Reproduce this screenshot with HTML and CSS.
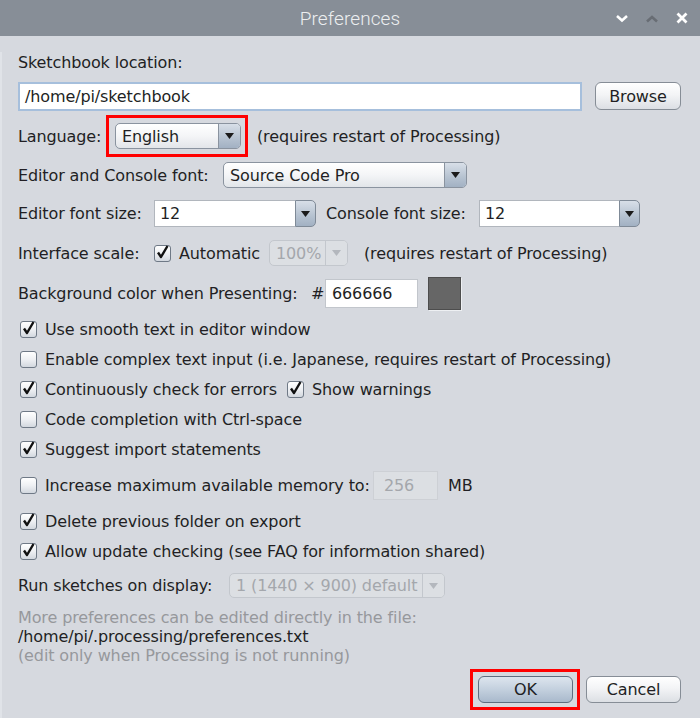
FILE: index.html
```html
<!DOCTYPE html>
<html>
<head>
<meta charset="utf-8">
<link rel="stylesheet" href="styles.css">
</head>
<body>
<div class="window">
  <div class="titlebar">
    <span class="title">Preferences</span>
    <div class="wm">
      <svg class="wm-btn wm-down" width="14" height="10" viewBox="0 0 14 10"><path d="M2 3 L7 7.5 L12 3" fill="none" stroke="#ffffff" stroke-width="2.6"/></svg>
      <svg class="wm-btn wm-up" width="14" height="10" viewBox="0 0 14 10"><path d="M2 7.5 L7 3 L12 7.5" fill="none" stroke="#686d74" stroke-width="2.6"/></svg>
      <svg class="wm-btn wm-close" width="12" height="12" viewBox="0 0 12 12"><path d="M1.5 1.5 L10.5 10.5 M10.5 1.5 L1.5 10.5" fill="none" stroke="#ffffff" stroke-width="2.8"/></svg>
    </div>
  </div>
  <div class="body">
    <div class="row r-label">Sketchbook location:</div>

    <div class="row r-path">
      <div class="textfield path">/home/pi/sketchbook</div>
      <div class="btn browse">Browse</div>
    </div>

    <div class="row r-lang">
      <span class="lbl w-lang">Language:</span>
      <div class="highlight hl-lang">
        <div class="combo c-lang">
          <span class="combo-text">English</span>
          <span class="combo-arrow"><svg width="9" height="6" viewBox="0 0 9 6"><path d="M0 0 H9 L4.5 6 Z" fill="#1b1b1b"/></svg></span>
        </div>
      </div>
      <span class="note-lang">(requires restart of Processing)</span>
    </div>

    <div class="row r-font">
      <span class="lbl w-font">Editor and Console font:</span>
      <div class="combo c-font">
        <span class="combo-text">Source Code Pro</span>
        <span class="combo-arrow"><svg width="9" height="6" viewBox="0 0 9 6"><path d="M0 0 H9 L4.5 6 Z" fill="#1b1b1b"/></svg></span>
      </div>
    </div>

    <div class="row r-size">
      <span class="lbl w-size">Editor font size:</span>
      <div class="ecombo c-size">
        <span class="ecombo-field">12</span>
        <span class="ecombo-arrow"><svg width="9" height="6" viewBox="0 0 9 6"><path d="M0 0 H9 L4.5 6 Z" fill="#1b1b1b"/></svg></span>
      </div>
      <span class="lbl w-csize">Console font size:</span>
      <div class="ecombo c-csize">
        <span class="ecombo-field">12</span>
        <span class="ecombo-arrow"><svg width="9" height="6" viewBox="0 0 9 6"><path d="M0 0 H9 L4.5 6 Z" fill="#1b1b1b"/></svg></span>
      </div>
    </div>

    <div class="row r-scale">
      <span class="lbl w-size">Interface scale:</span>
      <span class="cb checked"><svg width="17" height="17" viewBox="0 0 17 17"><path d="M4 8.5 L7 13 L13.5 2" fill="none" stroke="#111" stroke-width="2.4" stroke-linejoin="round"/></svg></span>
      <span class="w-auto">Automatic</span>
      <div class="combo disabled c-scale">
        <span class="combo-text">100%</span>
        <span class="combo-arrow"><svg width="9" height="6" viewBox="0 0 9 6"><path d="M0 0 H9 L4.5 6 Z" fill="#b3b7bd"/></svg></span>
      </div>
      <span class="note-scale">(requires restart of Processing)</span>
    </div>

    <div class="row r-bg">
      <span class="lbl w-bg">Background color when Presenting:</span>
      <span class="hash">#</span>
      <div class="textfield hex">666666</div>
      <div class="swatch"></div>
    </div>

    <div class="checks">
      <div class="row r-check">
        <span class="cb checked"><svg width="17" height="17" viewBox="0 0 17 17"><path d="M4 8.5 L7 13 L13.5 2" fill="none" stroke="#111" stroke-width="2.4" stroke-linejoin="round"/></svg></span>
        <span>Use smooth text in editor window</span>
      </div>
      <div class="row r-check">
        <span class="cb"></span>
        <span>Enable complex text input (i.e. Japanese, requires restart of Processing)</span>
      </div>
      <div class="row r-check">
        <span class="cb checked"><svg width="17" height="17" viewBox="0 0 17 17"><path d="M4 8.5 L7 13 L13.5 2" fill="none" stroke="#111" stroke-width="2.4" stroke-linejoin="round"/></svg></span>
        <span class="w-cont">Continuously check for errors</span>
        <span class="cb checked"><svg width="17" height="17" viewBox="0 0 17 17"><path d="M4 8.5 L7 13 L13.5 2" fill="none" stroke="#111" stroke-width="2.4" stroke-linejoin="round"/></svg></span>
        <span>Show warnings</span>
      </div>
      <div class="row r-check">
        <span class="cb"></span>
        <span>Code completion with Ctrl-space</span>
      </div>
      <div class="row r-check">
        <span class="cb checked"><svg width="17" height="17" viewBox="0 0 17 17"><path d="M4 8.5 L7 13 L13.5 2" fill="none" stroke="#111" stroke-width="2.4" stroke-linejoin="round"/></svg></span>
        <span>Suggest import statements</span>
      </div>
    </div>

    <div class="row r-mem">
      <span class="cb"></span>
      <span class="w-mem">Increase maximum available memory to:</span>
      <div class="textfield disabled-field mem">256</div>
      <span class="mb">MB</span>
    </div>

    <div class="row r-check r-delete">
      <span class="cb checked"><svg width="17" height="17" viewBox="0 0 17 17"><path d="M4 8.5 L7 13 L13.5 2" fill="none" stroke="#111" stroke-width="2.4" stroke-linejoin="round"/></svg></span>
      <span>Delete previous folder on export</span>
    </div>
    <div class="row r-check">
      <span class="cb checked"><svg width="17" height="17" viewBox="0 0 17 17"><path d="M4 8.5 L7 13 L13.5 2" fill="none" stroke="#111" stroke-width="2.4" stroke-linejoin="round"/></svg></span>
      <span>Allow update checking (see FAQ for information shared)</span>
    </div>

    <div class="row r-run">
      <span class="lbl w-run">Run sketches on display:</span>
      <div class="combo disabled c-run">
        <span class="combo-text">1 (1440 × 900) default</span>
        <span class="combo-arrow"><svg width="9" height="6" viewBox="0 0 9 6"><path d="M0 0 H9 L4.5 6 Z" fill="#b3b7bd"/></svg></span>
      </div>
    </div>

    <div class="notes">
      <div class="gray">More preferences can be edited directly in the file:</div>
      <div>/home/pi/.processing/preferences.txt</div>
      <div class="gray">(edit only when Processing is not running)</div>
    </div>

    <div class="row r-buttons">
      <div class="highlight hl-ok">
        <div class="btn ok">OK</div>
      </div>
      <div class="btn cancel">Cancel</div>
    </div>
  </div>
</div>
</body>
</html>
```

FILE: styles.css
```css
* { box-sizing: border-box; }

html, body {
  margin: 0;
  padding: 0;
  background: #d6d9df;
}

.window {
  width: 700px;
  height: 718px;
  overflow: hidden;
  background: #d6d9df;
  font-family: "DejaVu Sans", sans-serif;
  font-size: 16px;
  letter-spacing: -0.12px;
  color: #221f24;
}

.titlebar {
  height: 36px;
  background: #878e97;
  position: relative;
  display: flex;
  align-items: center;
  justify-content: center;
}

.title {
  font-family: Roboto, "Noto Sans", sans-serif;
  font-weight: 300;
  font-size: 19px;
  color: #eceef0;
  letter-spacing: 0.1px;
}

.wm {
  position: absolute;
  right: 0;
  top: 0;
  height: 36px;
  display: flex;
  align-items: center;
}

.wm-btn { display: block; }
.wm-down { margin-right: 16px; }
.wm-up { margin-right: 17px; margin-top: 1px; }
.wm-close { margin-right: 12px; }

.body {
  padding: 0 19px 0 18px;
  border-left: 2px solid #e0e3e8;
  margin-left: 0;
  height: 682px;
}

.row {
  display: flex;
  align-items: center;
  white-space: nowrap;
}

.lbl { flex: none; }

.r-label { margin-top: 16px; height: 20px; margin-left: -2px; }

.r-path { margin-top: 10px; height: 29px; margin-left: -2px; align-items: flex-start; }

.textfield {
  background: #ffffff;
  border: 1px solid #b4b8be;
  display: flex;
  align-items: center;
  padding-left: 6px;
}

.path {
  width: 564px;
  height: 29px;
  border: 2px solid #a6bfdc;
  padding-left: 5px;
}

.btn {
  display: flex;
  align-items: center;
  justify-content: center;
  border: 1px solid #868d96;
  border-radius: 6px;
  background: linear-gradient(#ffffff, #f3f4f6 45%, #dcdfe4);
  height: 28px;
}

.browse { width: 86px; margin-left: 13px; }

.r-lang { margin-top: 4px; height: 42px; margin-left: -2px; }
.w-lang { width: 88px; }

.highlight {
  border: 3px solid #ff0000;
}

.hl-lang {
  padding: 5px 4px 5px 6px;
}

.combo {
  display: flex;
  align-items: stretch;
  height: 26px;
  border: 1px solid #8a939f;
  border-radius: 5px;
  background: linear-gradient(#ffffff, #f4f5f7 50%, #e2e5e9);
  overflow: hidden;
}

.combo-text {
  flex: 1;
  display: flex;
  align-items: center;
  padding-left: 6px;
}

.combo-arrow {
  width: 22px;
  border-left: 1px solid #8a939f;
  background: linear-gradient(#d8dfe8, #b8c4d2 55%, #a2b1c3);
  display: flex;
  align-items: center;
  justify-content: center;
}

.c-lang { width: 126px; }
.note-lang { margin-left: 9px; }

.r-font { margin-top: 5px; height: 26px; margin-left: -2px; }
.w-font { width: 205px; }
.c-font { width: 244px; }

.r-size { margin-top: 12px; height: 27px; margin-left: -2px; }
.w-size { width: 136px; }
.w-csize { width: 153px; margin-left: 10px; }

.ecombo {
  display: flex;
  height: 27px;
}

.ecombo-field {
  flex: 1;
  background: #ffffff;
  border: 1px solid #b1b6bd;
  border-right: none;
  display: flex;
  align-items: center;
  padding-left: 5px;
}

.ecombo-arrow {
  width: 21px;
  border: 1px solid #7f8a97;
  border-radius: 0 5px 5px 0;
  background: linear-gradient(#d8dfe8, #b8c4d2 55%, #a2b1c3);
  display: flex;
  align-items: center;
  justify-content: center;
}

.c-size { width: 162px; }
.c-csize { width: 161px; }

.r-scale { margin-top: 13px; height: 26px; margin-left: -2px; }

.cb {
  flex: none;
  width: 17px;
  height: 17px;
  border: 1px solid #6f7986;
  border-radius: 3px;
  background: linear-gradient(#ffffff, #eef0f3 50%, #d3d8df);
  position: relative;
  margin-right: 8px;
}

.cb svg {
  position: absolute;
  left: -1px;
  top: -2px;
}

.w-auto { width: 90px; }

.combo.disabled {
  border-color: #c3c7cd;
  background: #dcdfe3;
  color: #a4a7ac;
}

.combo.disabled .combo-arrow {
  border-left-color: #c3c7cd;
  background: #dcdfe3;
}

.c-scale { width: 79px; }
.note-scale { margin-left: 16px; }

.r-bg { margin-top: 11px; height: 33px; margin-left: -2px; }
.w-bg { width: 293px; }
.hash { width: 14px; }

.hex {
  width: 93px;
  height: 29px;
  border-color: #c2c6cc;
}

.swatch {
  width: 33px;
  height: 33px;
  margin-left: 10px;
  background: #666666;
  border: 1px solid #4d4d4d;
  box-shadow: 1px 1px 0 #eef0f3;
}

.checks { margin-top: 4px; }

.r-check { height: 30px; }

.w-cont { width: 242px; flex: none; }

.r-mem { margin-top: 7px; height: 29px; }
.w-mem { width: 328px; }

.textfield.disabled-field {
  background: #dcdfe3;
  border: 1px solid #cdd0d5;
  color: #a4a7ac;
}

.mem { width: 65px; height: 29px; padding-left: 10px; }
.mb { margin-left: 10px; }

.r-delete { margin-top: 6px; }

.r-run { margin-top: 7px; height: 25px; margin-left: -2px; }
.w-run { width: 211px; }
.c-run { width: 216px; height: 25px; }

.notes {
  margin-top: 10px;
  line-height: 19px;
  margin-left: -2px;
}

.gray { color: #96989c; }

.r-buttons {
  margin-top: 4px;
  height: 41px;
  justify-content: flex-end;
  align-items: flex-start;
}

.hl-ok {
  padding: 4px 4px 4px 5px;
}

.ok {
  width: 95px;
  height: 27px;
  border-color: #5e6d80;
  background: linear-gradient(#dde5ee, #c3d0de 50%, #a9b9cc);
}

.cancel {
  width: 95px;
  height: 27px;
  margin-left: 6px;
  margin-top: 7px;
}
```
